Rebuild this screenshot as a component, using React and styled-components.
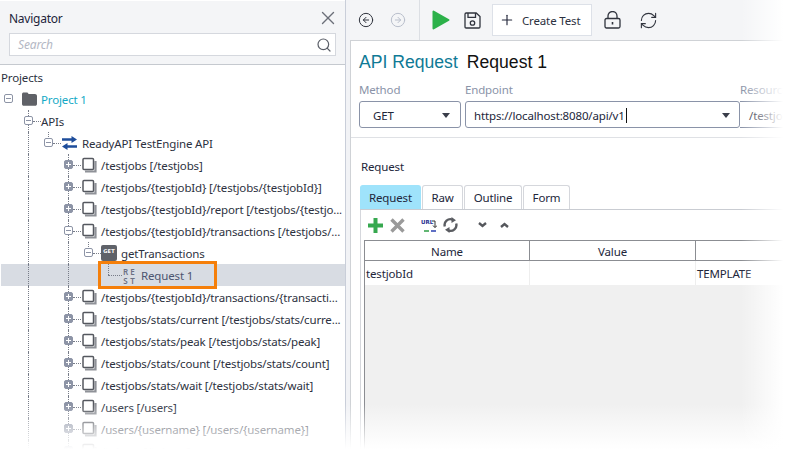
import React from 'react';
import styled, { createGlobalStyle } from 'styled-components';
import { X, Search, Plus, RefreshCw, CircleArrowLeft, CircleArrowRight } from 'lucide-react';

const GlobalStyle = createGlobalStyle`
    html, body {
        margin: 0;
        background: #fff;
    }
    body {
        width: 789px;
        height: 454px;
        overflow: hidden;
        font-family: "Noto Sans", "Open Sans", sans-serif;
        font-size: 11.5px;
        letter-spacing: -0.15px;
        color: #2c3140;
    }
`;

const Window = styled.div`
    position: relative;
    width: 789px;
    height: 454px;
    display: flex;
    overflow: hidden;
`;
const FadeRight = styled.div`
    position: absolute;
    z-index: 2;
    top: 0;
    right: 0;
    bottom: 0;
    width: 48px;
    background: linear-gradient(to right, rgba(255, 255, 255, 0), #fff 88%);
    pointer-events: none;
`;
const FadeBottom = styled.div`
    position: absolute;
    z-index: 2;
    left: 0;
    right: 0;
    bottom: 0;
    height: 50px;
    background: linear-gradient(to bottom, rgba(255, 255, 255, 0), #fff 90%);
    pointer-events: none;
`;

/* navigator */
const Navigator = styled.aside`
    width: 345px;
    flex: none;
    border-right: 1px solid #c9ced9;
    display: flex;
    flex-direction: column;
`;
const NavHeader = styled.header`
    height: 65px;
    flex: none;
    box-sizing: border-box;
    background: #f4f5f7;
    border-top: 1px solid #fff;
    border-bottom: 1px solid #c5c9cf;
    padding: 8px 9px 0;
    display: flex;
    flex-direction: column;
    gap: 6px;
`;
const NavTitleRow = styled.div`
    display: flex;
    align-items: center;
    justify-content: space-between;
    height: 18px;
    font-size: 12px;
    letter-spacing: -0.25px;
    color: #22243a;
    svg {
        color: #6b6f78;
        margin-right: -3px;
    }
`;
const SearchBox = styled.div`
    height: 23px;
    box-sizing: border-box;
    width: 327px;
    background: #fff;
    border: 1px solid #d5d8de;
    display: flex;
    align-items: center;
    justify-content: space-between;
    padding: 0 3px 0 8px;
    font-style: italic;
    font-size: 12px;
    color: #b4b8c4;
    svg {
        color: #5b5f68;
    }
`;
const Tree = styled.div`
    padding-top: 1px;
    display: flex;
    flex-direction: column;
`;
const Row = styled.div`
    position: relative;
    height: 22px;
    flex: none;
    display: flex;
    align-items: center;
    white-space: nowrap;
    margin-left: ${p => (p.$selected ? '1px' : '0')};
    padding-left: ${p => (p.$plain ? '1px' : '0')};
    background: ${p => (p.$selected ? '#d8dce3' : 'transparent')};
`;
const Cell = styled.span`
    position: relative;
    flex: none;
    width: 20px;
    height: 22px;
    margin-left: ${p => (p.$shift ? '-1px' : '0')};
    &::before {
        content: '';
        display: ${p => (p.$line ? 'block' : 'none')};
        position: absolute;
        left: 8px;
        top: 0;
        height: ${p => (p.$line === 'half' ? '11px' : '22px')};
        border-left: 1px dotted #777c88;
    }
    &::after {
        content: '';
        display: ${p => (p.$tick ? 'block' : 'none')};
        position: absolute;
        left: ${p => (p.$tick === 'long' ? '8px' : '13px')};
        top: 11px;
        width: ${p => (p.$tick === 'long' ? '14px' : '8px')};
        border-top: 1px dotted #777c88;
    }
`;
const Expander = styled.span`
    position: absolute;
    z-index: 1;
    left: 4px;
    top: 6px;
    width: 9px;
    height: 9px;
    box-sizing: border-box;
    border-radius: 2px;
    background: ${p => (p.$open ? '#fff' : '#8d94a6')};
    border: 1px solid #8d94a6;
    &::before {
        content: '';
        position: absolute;
        left: 1px;
        top: 3px;
        width: 5px;
        height: 1px;
        background: ${p => (p.$open ? '#8d94a6' : '#fff')};
    }
    &::after {
        content: '';
        display: ${p => (p.$open ? 'none' : 'block')};
        position: absolute;
        left: 3px;
        top: 1px;
        width: 1px;
        height: 5px;
        background: #fff;
    }
`;
const IconSlot = styled.span`
    flex: none;
    width: 15px;
    height: 16px;
    margin: 0 4px 0 2px;
    display: flex;
    align-items: center;
    justify-content: center;
`;
const Label = styled.span`
    padding-top: 1px;
    color: ${p => p.$color || '#2c3140'};
    margin-left: ${p => p.$gap || 0}px;
`;
const GetBadge = styled.span`
    flex: none;
    width: 16px;
    height: 16px;
    margin: 0 4px 0 1px;
    border-radius: 2px;
    background: #5f6269;
    color: #fff;
    font-family: "DejaVu Sans", sans-serif;
    font-weight: 700;
    font-size: 5px;
    letter-spacing: 0.2px;
    line-height: 13px;
    text-align: center;
`;
const RestBadge = styled.span`
    flex: none;
    width: 14px;
    margin: 0 4px 0 2px;
    padding-top: 1px;
    display: grid;
    grid-template-columns: 7px 7px;
    font-size: 8px;
    font-weight: 600;
    line-height: 9px;
    letter-spacing: 0;
    color: #6b7083;
    text-align: center;
`;
const Highlight = styled.div`
    position: absolute;
    left: 97px;
    top: -3px;
    width: 119px;
    height: 28px;
    box-sizing: border-box;
    border: 3px solid #f57f0a;
    pointer-events: none;
`;

/* request editor */
const Gutter = styled.div`
    width: 4px;
    flex: none;
    background: #f2f3f6;
`;
const Editor = styled.main`
    flex: 1;
    min-width: 0;
    display: flex;
    flex-direction: column;
`;
const ToolBar = styled.div`
    height: 41px;
    flex: none;
    box-sizing: border-box;
    background: #f4f5f7;
    border-bottom: 1px solid #cfd2d6;
    display: flex;
    align-items: center;
    padding-left: 8px;
    color: #30343e;
`;
const NavIcon = styled.span`
    display: flex;
    width: 16px;
    margin-right: ${p => p.$after || 0}px;
    color: ${p => (p.$disabled ? '#b9bfcc' : '#30343e')};
`;
const ToolSeparator = styled.span`
    width: 1px;
    height: 40px;
    background: #dcdfe4;
    margin-right: 12px;
`;
const ToolIcon = styled.span`
    display: flex;
    margin-right: ${p => p.$after || 0}px;
`;
const CreateButton = styled.button`
    width: 100px;
    height: 32px;
    margin-right: 12px;
    padding: 0 0 0 6px;
    box-sizing: border-box;
    display: flex;
    align-items: center;
    gap: 7px;
    background: #fff;
    border: 1px solid #dde1e8;
    font: inherit;
    letter-spacing: inherit;
    color: #2c3140;
    svg {
        color: #22263a;
    }
`;
const Body = styled.div`
    flex: 1;
    border-left: 1px solid #cfd2d6;
    display: flex;
    flex-direction: column;
    min-height: 0;
`;
const TitleRow = styled.div`
    height: 42px;
    flex: none;
    box-sizing: border-box;
    padding: 10px 0 0 8px;
    display: flex;
    gap: 9px;
    font-family: "Liberation Sans", Arial, sans-serif;
    font-size: 17.6px;
    letter-spacing: 0;
    line-height: 22px;
    color: #111;
`;
const TitleKind = styled.span`
    color: #0f7a96;
`;
const Fields = styled.div`
    flex: none;
    height: 55px;
    box-sizing: border-box;
    padding-left: 8px;
    border-bottom: 1px solid #dfe1e5;
    display: flex;
    width: 700px;
`;
const Field = styled.div`
    flex: none;
    width: ${p => p.$width}px;
    margin-right: ${p => p.$after || 0}px;
`;
const FieldLabel = styled.div`
    height: 18px;
    line-height: 13px;
    color: #8a93a8;
`;
const Control = styled.div`
    height: 27px;
    box-sizing: border-box;
    border: 1px solid #8a93a8;
    border-left-width: ${p => (p.$joined ? 0 : '1px')};
    border-radius: ${p => (p.$joined ? '0' : '3px')};
    display: flex;
    align-items: center;
    justify-content: space-between;
    padding: 1px 8px 0;
    padding-left: ${p => p.$inset}px;
    color: #22263a;
`;
const Caret = styled.span`
    width: 0;
    height: 0;
    border-left: 4px solid transparent;
    border-right: 4px solid transparent;
    border-top: 5px solid #3a3e4a;
    margin-right: ${p => p.$after || 0}px;
`;
const TextCursor = styled.span`
    display: inline-block;
    width: 1px;
    height: 15px;
    margin-left: 1px;
    background: #111;
    vertical-align: -3px;
`;
const SectionLabel = styled.div`
    flex: none;
    height: 47px;
    box-sizing: border-box;
    padding: 20px 0 0 10px;
    line-height: 17px;
    color: #22263a;
`;
const Tabs = styled.div`
    flex: none;
    height: 25px;
    box-sizing: border-box;
    margin-left: 9px;
    border-bottom: 1px solid #c9ccd2;
    display: flex;
    gap: 1px;
`;
const Tab = styled.div`
    width: ${p => p.$width}px;
    height: 24px;
    box-sizing: border-box;
    border: 1px solid ${p => (p.$active ? '#9fe3fb' : '#d5d7dc')};
    border-bottom: 0;
    border-radius: 3px 3px 0 0;
    background: ${p => (p.$active ? '#9fe3fb' : '#fff')};
    text-align: center;
    line-height: 24px;
    color: #22263a;
`;
const TabPanel = styled.div`
    flex: 1;
    margin-left: 9px;
    border-left: 1px solid #d5d7dc;
    padding-left: 3px;
    display: flex;
    flex-direction: column;
    min-height: 0;
`;
const PanelTools = styled.div`
    flex: none;
    height: 30px;
    display: flex;
    align-items: center;
    padding-left: 4px;
`;
const Table = styled.div`
    flex: 1;
    border-top: 1px solid #8b8d92;
    border-left: 1px solid #8b8d92;
    background: #f0f0f0;
`;
const TableGrid = styled.div`
    display: grid;
    grid-template-columns: 165px 166px 200px;
    grid-template-rows: 20px 24px;
    width: 531px;
    background: #fff;
`;
const HeadCell = styled.div`
    border-right: 1px solid #8b8d92;
    border-bottom: 1px solid #8b8d92;
    text-align: center;
    line-height: 21px;
    color: #22263a;
`;
const DataCell = styled.div`
    border-right: 1px solid #eee;
    line-height: 25px;
    padding-left: 1px;
    color: #22263a;
`;

const ResourceIcon = () => (
    <svg width="15" height="16" viewBox="0 0 15 16">
        <path d="M3 14.5h10.5V4" fill="none" stroke="#8f9298" strokeWidth="2.2" />
        <rect x="1" y="1.5" width="10.5" height="11" rx="1" fill="#fff" stroke="#55585f" strokeWidth="1.5" />
    </svg>
);
const FolderIcon = () => (
    <svg width="15" height="14" viewBox="0 0 15 14">
        <path d="M0 2.2C0 1 .8.4 1.6.4h3.2c.8 0 1 .4 1.4 1l.5.6H13c1 0 2 .7 2 2v8c0 1-.8 1.8-1.8 1.8H1.8C.8 13.8 0 13 0 12z" fill="#5f6167" />
    </svg>
);
const ApiIcon = () => (
    <svg width="15" height="14" viewBox="0 0 15 14" fill="#1e4d9b">
        <path d="M0 2.2h9.5V0L15 3.5 9.5 7V4.8H0z" />
        <path d="M15 9.2H5.5V7L0 10.5 5.5 14v-2.2H15z" />
    </svg>
);
const PlayIcon = () => (
    <svg width="18" height="20" viewBox="0 0 18 20">
        <path d="M1.5 1.5v17L16.5 10z" fill="#2cb14a" stroke="#2cb14a" strokeWidth="2" strokeLinejoin="round" />
    </svg>
);
const SaveIcon = () => (
    <svg width="17" height="17" viewBox="0 0 17 17" fill="none" stroke="#30343e" strokeWidth="1.3">
        <path d="M1 2.2C1 1.4 1.4 1 2.2 1h10L16 4.6v10.2c0 .8-.4 1.2-1.2 1.2H2.2c-.8 0-1.2-.4-1.2-1.2z" />
        <path d="M4 1v4.4h7.5V1" />
        <circle cx="8.5" cy="11" r="2.2" />
    </svg>
);
const LockIcon = () => (
    <svg width="17" height="18" viewBox="0 0 17 18" fill="none" stroke="#30343e" strokeWidth="1.3">
        <rect x="1" y="7.5" width="15" height="9.5" rx="1.5" />
        <path d="M4 7.5V5a4.5 4.5 0 0 1 9 0v2.5" />
        <path d="M8.5 11v2.5" strokeWidth="1.6" />
    </svg>
);
const AddIcon = () => (
    <svg width="15" height="15" viewBox="0 0 15 15">
        <path d="M7.5 0v15M0 7.5h15" stroke="#36a84f" strokeWidth="4" />
    </svg>
);
const RemoveIcon = () => (
    <svg width="15" height="15" viewBox="0 0 15 15">
        <path d="M1.5 1.5l12 12M13.5 1.5l-12 12" stroke="#9a9a9a" strokeWidth="3.4" />
    </svg>
);
const UrlIcon = () => (
    <svg width="16" height="15" viewBox="0 0 16 15">
        <text x="0" y="6" fontFamily="DejaVu Sans" fontWeight="700" fontSize="5.5" letterSpacing="0" fill="#1f2f8f">URL</text>
        <path d="M11 3h3v6M12 7.5l2 2.2 2-2.2" fill="none" stroke="#333" strokeWidth="1" />
        <path d="M3 13h5" stroke="#2e9e44" strokeWidth="1.5" />
        <path d="M10 13h5" stroke="#2a3fb0" strokeWidth="1.5" />
    </svg>
);
const CycleIcon = () => (
    <svg width="15" height="16" viewBox="0 0 15 16" fill="none" stroke="#5b5d62" strokeWidth="2.4">
        <path d="M1.8 9.5A5.8 5.8 0 0 1 9.5 2.6" />
        <path d="M13.2 6.5A5.8 5.8 0 0 1 5.5 13.4" />
        <path d="M8.5 0l4.5 3.2L8.5 6z" fill="#5b5d62" stroke="none" />
        <path d="M6.5 16L2 12.8 6.5 10z" fill="#5b5d62" stroke="none" />
    </svg>
);
const Chevron = ({ up }) => (
    <svg width="9" height="6" viewBox="0 0 9 6">
        <path d={up ? 'M1 5l3.5-3L8 5' : 'M1 1l3.5 3L8 1'} fill="none" stroke="#55575c" strokeWidth="2.4" />
    </svg>
);

const resources = [
    '/testjobs [/testjobs]',
    '/testjobs/{testjobId} [/testjobs/{testjobId}]',
    '/testjobs/{testjobId}/report [/testjobs/{testjo...',
    '/testjobs/{testjobId}/transactions [/testjobs/...',
];
const moreResources = [
    '/testjobs/{testjobId}/transactions/{transacti...',
    '/testjobs/stats/current [/testjobs/stats/curre...',
    '/testjobs/stats/peak [/testjobs/stats/peak]',
    '/testjobs/stats/count [/testjobs/stats/count]',
    '/testjobs/stats/wait [/testjobs/stats/wait]',
    '/users [/users]',
    '/users/{username} [/users/{username}]',
    '/tokens [/tokens]',
];

const ResourceRow = ({ label, open }) => (
    <Row>
        <Cell />
        <Cell $line="full" />
        <Cell />
        <Cell $line="full" $tick="short">
            <Expander $open={open} />
        </Cell>
        <IconSlot><ResourceIcon /></IconSlot>
        <Label>{label}</Label>
    </Row>
);

const App = () => {
    return (
        <Window>
            <GlobalStyle />
            <Navigator>
                <NavHeader>
                    <NavTitleRow>
                        Navigator
                        <X size={22} strokeWidth={1.5} />
                    </NavTitleRow>
                    <SearchBox>
                        Search
                        <Search size={16} strokeWidth={1.8} />
                    </SearchBox>
                </NavHeader>
                <Tree>
                    <Row $plain><Label>Projects</Label></Row>
                    <Row>
                        <Cell>
                            <Expander $open />
                        </Cell>
                        <IconSlot><FolderIcon /></IconSlot>
                        <Label $color="#13a9c6">Project 1</Label>
                    </Row>
                    <Row>
                        <Cell />
                        <Cell $line="full" $tick="short">
                            <Expander $open />
                        </Cell>
                        <Label $gap={1}>APIs</Label>
                    </Row>
                    <Row>
                        <Cell />
                        <Cell $line="full" />
                        <Cell $line="half" $tick="short">
                            <Expander $open />
                        </Cell>
                        <IconSlot><ApiIcon /></IconSlot>
                        <Label $gap={1}>ReadyAPI TestEngine API</Label>
                    </Row>
                    {resources.map((label, i) => (
                        <ResourceRow key={label} label={label} open={i === 3} />
                    ))}
                    <Row>
                        <Cell />
                        <Cell $line="full" />
                        <Cell />
                        <Cell $line="full" />
                        <Cell $line="half" $tick="short">
                            <Expander $open />
                        </Cell>
                        <GetBadge>GET</GetBadge>
                        <Label>getTransactions</Label>
                    </Row>
                    <Row $selected>
                        <Cell $shift />
                        <Cell $line="full" />
                        <Cell />
                        <Cell $line="full" />
                        <Cell />
                        <Cell $line="half" $tick="long" />
                        <RestBadge>
                            <span>R</span><span>E</span><span>S</span><span>T</span>
                        </RestBadge>
                        <Label $gap={1} $color="#4c5470">Request 1</Label>
                        <Highlight />
                    </Row>
                    {moreResources.map(label => (
                        <ResourceRow key={label} label={label} />
                    ))}
                </Tree>
            </Navigator>
            <Gutter />
            <Editor>
                <ToolBar>
                    <NavIcon $after={16}><CircleArrowLeft size={16} strokeWidth={1.5} /></NavIcon>
                    <NavIcon $after={13} $disabled><CircleArrowRight size={16} strokeWidth={1.5} /></NavIcon>
                    <ToolSeparator />
                    <ToolIcon $after={14}><PlayIcon /></ToolIcon>
                    <ToolIcon $after={11}><SaveIcon /></ToolIcon>
                    <CreateButton>
                        <Plus size={16} strokeWidth={1.7} />
                        Create Test
                    </CreateButton>
                    <ToolIcon $after={18}><LockIcon /></ToolIcon>
                    <ToolIcon><RefreshCw size={19} strokeWidth={1.4} /></ToolIcon>
                </ToolBar>
                <Body>
                    <TitleRow>
                        <TitleKind>API Request</TitleKind>
                        Request 1
                    </TitleRow>
                    <Fields>
                        <Field $width={102} $after={4}>
                            <FieldLabel>Method</FieldLabel>
                            <Control $inset={13}>
                                GET
                                <Caret $after={2} />
                            </Control>
                        </Field>
                        <Field $width={275}>
                            <FieldLabel>Endpoint</FieldLabel>
                            <Control $inset={8}>
                                <span>https://localhost:8080/api/v1<TextCursor /></span>
                                <Caret $after={1} />
                            </Control>
                        </Field>
                        <Field $width={200}>
                            <FieldLabel>Resource</FieldLabel>
                            <Control $joined $inset={9}>/testjobs</Control>
                        </Field>
                    </Fields>
                    <SectionLabel>Request</SectionLabel>
                    <Tabs>
                        <Tab $width={61} $active>Request</Tab>
                        <Tab $width={41}>Raw</Tab>
                        <Tab $width={58}>Outline</Tab>
                        <Tab $width={47}>Form</Tab>
                    </Tabs>
                    <TabPanel>
                        <PanelTools>
                            <ToolIcon $after={7}><AddIcon /></ToolIcon>
                            <ToolIcon $after={16}><RemoveIcon /></ToolIcon>
                            <ToolIcon $after={6}><UrlIcon /></ToolIcon>
                            <ToolIcon $after={20}><CycleIcon /></ToolIcon>
                            <ToolIcon $after={13}><Chevron /></ToolIcon>
                            <ToolIcon><Chevron up /></ToolIcon>
                        </PanelTools>
                        <Table>
                            <TableGrid>
                                <HeadCell>Name</HeadCell>
                                <HeadCell>Value</HeadCell>
                                <HeadCell>Type</HeadCell>
                                <DataCell>testjobId</DataCell>
                                <DataCell />
                                <DataCell>TEMPLATE</DataCell>
                            </TableGrid>
                        </Table>
                    </TabPanel>
                </Body>
            </Editor>
            <FadeBottom />
            <FadeRight />
        </Window>
    );
};

export default App;
